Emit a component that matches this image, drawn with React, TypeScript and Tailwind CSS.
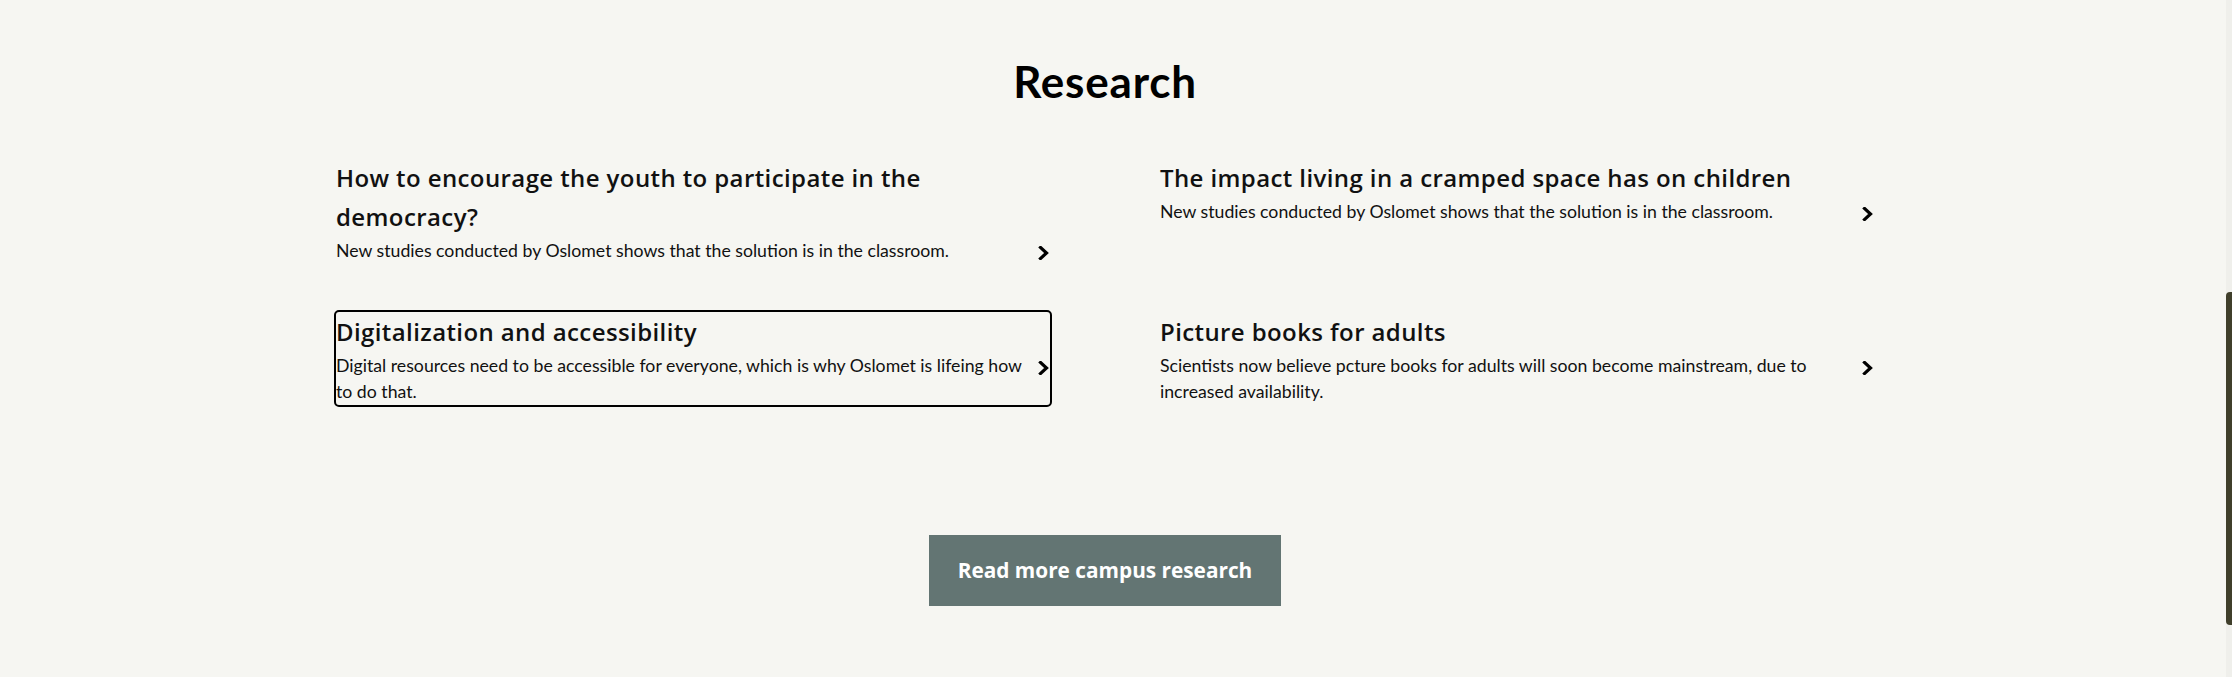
import React from "react";

type Item = {
  title: string;
  text: string;
  focused?: boolean;
};

const items: Item[] = [
  {
    title: "How to encourage the youth to participate in the democracy?",
    text: "New studies conducted by Oslomet shows that the solution is in the classroom.",
  },
  {
    title: "The impact living in a cramped space has on children",
    text: "New studies conducted by Oslomet shows that the solution is in the classroom.",
  },
  {
    title: "Digitalization and accessibility",
    text: "Digital resources need to be accessible for everyone, which is why Oslomet is lifeing how to do that.",
    focused: true,
  },
  {
    title: "Picture books for adults",
    text: "Scientists now believe pcture books for adults will soon become mainstream, due to increased availability.",
  },
];

function Chevron() {
  return (
    <svg
      width="12"
      height="14"
      viewBox="0 0 12 14"
      className="shrink-0 mt-[8px]"
      fill="none"
    >
      <polyline
        points="2.5,1.5 8.5,7 2.5,12.5"
        stroke="#000"
        strokeWidth="3.2"
        strokeLinecap="square"
      />
    </svg>
  );
}

function ResearchCard({ item }: { item: Item }) {
  return (
    <a
      href="#"
      className={`block text-[#111] ${
        item.focused ? "outline-2 outline-black rounded-[3px]" : ""
      }`}
    >
      <h3 className="pr-[26px] font-['Open_Sans',sans-serif] text-[24px] leading-[39px] font-semibold tracking-[0.4px]">
        {item.title}
      </h3>
      <div className="mt-[2px] flex items-start">
        <p className="flex-1 pr-[14px] text-[17.7px] leading-[26px] text-[#111]">
          {item.text}
        </p>
        <Chevron />
      </div>
    </a>
  );
}

export default function App() {
  return (
    <div className="relative min-h-screen bg-[#f6f6f2] font-['Lato',sans-serif] text-black">
      <section className="pr-[22px] pt-[59px] pb-[71px]">
        {/* HEADING */}
        <h2 className="text-center text-[44px] leading-[44px] font-bold tracking-[0.8px]">
          Research
        </h2>

        {/* CARDS */}
        <div className="mx-auto mt-[55px] grid w-[1538px] grid-cols-2 gap-x-[110px] gap-y-[48px]">
          {items.map((it) => (
            <ResearchCard key={it.title} item={it} />
          ))}
        </div>

        {/* BUTTON */}
        <div className="mt-[130px] flex justify-center">
          <button className="h-[71px] w-[352px] bg-[#637573] font-['Open_Sans',sans-serif] text-[20.8px] font-bold text-white">
            Read more campus research
          </button>
        </div>
      </section>

      {/* SCROLLBAR */}
      <div className="absolute right-0 top-0 h-[677px] w-[6px] bg-[#efefeb]">
        <div className="absolute left-0 top-[292px] h-[333px] w-[6px] rounded-l-[4px] bg-[#403f2b]" />
      </div>
    </div>
  );
}
